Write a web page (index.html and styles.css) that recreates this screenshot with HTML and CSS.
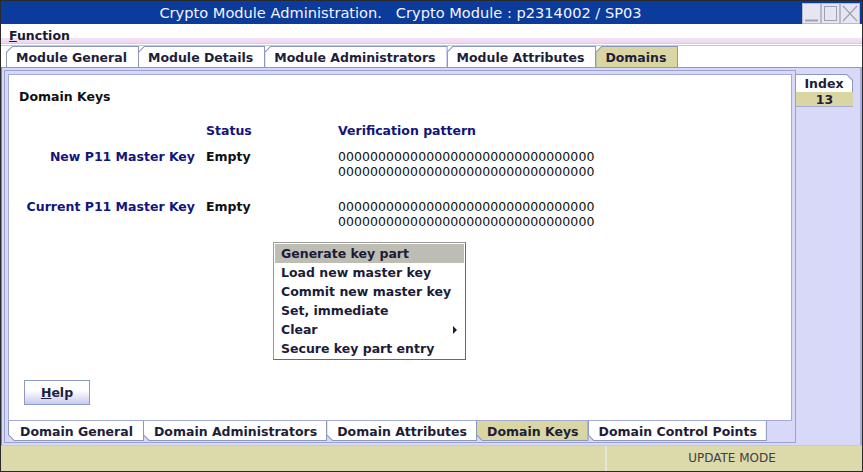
FILE: index.html
```html
<!DOCTYPE html>
<html>
<head>
    <title>Crypto Module Administration</title>
    <meta charset="UTF-8">
    <link rel="stylesheet" href="styles.css">
</head>
<body>
    <div class="window">

        <div class="titlebar">
            <div class="title">Crypto Module Administration.&nbsp;&nbsp; Crypto Module : p2314002 / SP03</div>
            <div class="wbtns">
                <svg width="58" height="21" viewBox="0 0 58 21">
                    <rect x="0.5" y="0.5" width="18" height="20" fill="#e6e6f2" stroke="#b8b8c8"/>
                    <line x1="3" y1="17.5" x2="16" y2="17.5" stroke="#a0a0b4" stroke-width="2"/>
                    <rect x="19.5" y="0.5" width="18" height="20" fill="#e6e6f2" stroke="#b8b8c8"/>
                    <rect x="22.5" y="3.5" width="12" height="14" fill="none" stroke="#a0a0b4"/>
                    <rect x="38.5" y="0.5" width="19" height="20" fill="#e6e6f2" stroke="#b8b8c8"/>
                    <path d="M41 3 L55 18 M55 3 L41 18" stroke="#a0a0b4" stroke-width="1.2"/>
                </svg>
            </div>
        </div>

        <div class="menubar">
            <span class="menu-item"><u>F</u>unction</span>
        </div>

        <div class="tabs top-tabs">
            <div class="tab"><span>Module General</span></div>
            <div class="tab"><span>Module Details</span></div>
            <div class="tab"><span>Module Administrators</span></div>
            <div class="tab"><span>Module Attributes</span></div>
            <div class="tab selected"><span>Domains</span></div>
        </div>

        <div class="pane">
            <div class="inner">
                <div class="content">
                    <div class="heading">Domain Keys</div>

                    <div class="keys">
                        <div class="label"></div>
                        <div class="colhead status">Status</div>
                        <div class="colhead">Verification pattern</div>

                        <div class="label gap-a">New P11 Master Key</div>
                        <div class="value status gap-a">Empty</div>
                        <div class="pattern gap-a">00000000000000000000000000000000<br>00000000000000000000000000000000</div>

                        <div class="label gap-b">Current P11 Master Key</div>
                        <div class="value status gap-b">Empty</div>
                        <div class="pattern gap-b">00000000000000000000000000000000<br>00000000000000000000000000000000</div>
                    </div>

                    <button class="help"><u>H</u>elp</button>

                    <div class="popup">
                        <div class="popup-item active">Generate key part</div>
                        <div class="popup-item">Load new master key</div>
                        <div class="popup-item">Commit new master key</div>
                        <div class="popup-item">Set, immediate</div>
                        <div class="popup-item">Clear <span class="arrow"></span></div>
                        <div class="popup-item">Secure key part entry</div>
                    </div>
                </div>

                <div class="tabs bottom-tabs">
                    <div class="tab"><span>Domain General</span></div>
                    <div class="tab"><span>Domain Administrators</span></div>
                    <div class="tab"><span>Domain Attributes</span></div>
                    <div class="tab selected"><span>Domain Keys</span></div>
                    <div class="tab"><span>Domain Control Points</span></div>
                </div>
            </div>

            <div class="index">
                <div class="index-tab"><span>Index</span></div>
                <div class="index-value">13</div>
            </div>
        </div>

        <div class="statusbar">
            <div class="status-left"></div>
            <div class="status-right">UPDATE MODE</div>
        </div>

    </div>
</body>
</html>
```

FILE: styles.css
```css
body {
    margin: 0;
    padding: 0;
    font-family: 'DejaVu Sans', sans-serif;
    background: #2a2a2a;
}

.window {
    width: 863px;
    height: 472px;
    box-sizing: border-box;
    border: 1px solid #2a2a2a;
    background: #fff;
    display: flex;
    flex-direction: column;
    overflow: hidden;
}

/* title bar */
.titlebar {
    height: 23px;
    background: #0b3b9b;
    display: flex;
    align-items: center;
}

.title {
    flex: 1;
    text-align: center;
    color: #f4f4ff;
    font-size: 14.6px;
    padding-right: 2px;
}

.wbtns {
    width: 60px;
    height: 21px;
    padding-top: 1px;
}

.wbtns svg {
    display: block;
}

/* menu */
.menubar {
    height: 22px;
    box-sizing: border-box;
    background: linear-gradient(#fff 0, #fff 14px, #f3e2f4 14px, #ecd8f0 19px, #d8cce6 19px, #d8cce6 20px, #fff 20px);
    border-bottom: 1px solid #c8c8d4;
    padding-left: 8px;
}

.menu-item {
    font-size: 12.5px;
    font-weight: bold;
    color: #1a1a30;
    line-height: 21px;
    position: relative;
    top: 1px;
}

/* tabs */
.tabs {
    display: flex;
    font-size: 12.5px;
    font-weight: bold;
    color: #1e1e38;
}

.tab {
    background: #8c98bc;
    margin-left: -1px;
}

.tab span {
    display: block;
    background: #fff;
    white-space: nowrap;
}

.tab.selected span {
    background: #d9d6a4;
}

.top-tabs {
    height: 21px;
    padding-left: 6px;
    background: #fff;
}

.top-tabs .tab {
    padding: 1px 1px 0 1px;
    clip-path: polygon(0 100%, 0 6px, 6px 0, 100% 0, 100% 100%);
}

.top-tabs .tab span {
    height: 20px;
    line-height: 22px;
    padding: 0 11px 0 9px;
    clip-path: polygon(0 100%, 0 5.5px, 5.5px 0, 100% 0, 100% 100%);
}

.bottom-tabs {
    height: 20px;
    padding-left: 1px;
}

.bottom-tabs .tab {
    padding: 0 1px 1px 1px;
    clip-path: polygon(0 0, 100% 0, 100% 100%, 6px 100%, 0 calc(100% - 6px));
}

.bottom-tabs .tab span {
    height: 19px;
    line-height: 21px;
    padding: 0 9px 0 10px;
    clip-path: polygon(0 0, 100% 0, 100% 100%, 5.5px 100%, 0 calc(100% - 5.5px));
}

.bottom-tabs .tab:first-child span {
    padding: 0 10px 0 11px;
}

/* panes */
.pane {
    height: 378px;
    box-sizing: border-box;
    background: #d8d8f8;
    border-top: 1px solid #8c98c8;
    border-left: 1px solid #7c84b4;
    border-right: 2px solid #a8acd8;
    padding: 2px 0 0 2px;
    display: flex;
}

.inner {
    width: 792px;
    height: 373px;
    box-sizing: border-box;
    border: 1px solid #9aa2d4;
    padding: 3px 3px 1px 3px;
    display: flex;
    flex-direction: column;
}

.content {
    position: relative;
    height: 347px;
    box-sizing: border-box;
    background: #fff;
    border: 1px solid #a4aad8;
    font-size: 12.5px;
}

.heading {
    font-weight: bold;
    color: #111;
    line-height: 15px;
    margin: 14px 0 0 10px;
}

.keys {
    display: grid;
    grid-template-columns: 186px 143px auto;
    margin-top: 19px;
    line-height: 15px;
}

.label {
    text-align: right;
    font-weight: bold;
    color: #14147a;
}

.colhead {
    font-weight: bold;
    color: #14147a;
}

.status {
    padding-left: 11px;
}

.value {
    font-weight: bold;
    color: #111;
}

.pattern {
    color: #111;
    letter-spacing: 0.06px;
}

.gap-a {
    margin-top: 11px;
}

.gap-b {
    margin-top: 20px;
}

.help {
    display: block;
    margin: 151px 0 0 15px;
    width: 66px;
    height: 25px;
    border: 1px solid #8c9ac8;
    background: linear-gradient(#fff, #fff 40%, #c8c8f2);
    font-family: 'DejaVu Sans', sans-serif;
    font-size: 12.5px;
    font-weight: bold;
    color: #1e1e40;
    padding: 0;
}

/* popup menu */
.popup {
    position: absolute;
    left: 264px;
    top: 167px;
    width: 193px;
    box-sizing: border-box;
    background: #fff;
    border: 1px solid #9a9a9a;
    border-right-color: #6a6a6a;
    border-bottom-color: #6a6a6a;
    padding: 1px;
    font-weight: bold;
    color: #1c1c3a;
}

.popup-item {
    height: 19px;
    line-height: 19px;
    padding-left: 6px;
    position: relative;
}

.popup-item.active {
    background: #bdbdb4;
}

.arrow {
    position: absolute;
    right: 7px;
    top: 6px;
    border-left: 4px solid #1c1c3a;
    border-top: 4px solid transparent;
    border-bottom: 4px solid transparent;
}

/* index column */
.index {
    padding-top: 4px;
    margin-left: -1px;
    font-size: 12.5px;
    font-weight: bold;
    color: #1e1e38;
}

.index-tab {
    width: 58px;
    background: #8c98bc;
    padding: 1px 1px 0 1px;
    box-sizing: border-box;
    clip-path: polygon(0 0, calc(100% - 6px) 0, 100% 6px, 100% 100%, 0 100%);
}

.index-tab span {
    display: block;
    background: #fff;
    height: 17px;
    line-height: 17px;
    text-align: center;
    clip-path: polygon(0 0, calc(100% - 5.5px) 0, 100% 5.5px, 100% 100%, 0 100%);
}

.index-value {
    width: 57px;
    height: 15px;
    line-height: 15px;
    box-sizing: border-box;
    margin-left: 1px;
    background: #d9d6a4;
    border-bottom: 1px solid #a8acd0;
    text-align: center;
}

/* status bar */
.statusbar {
    flex: 1;
    display: flex;
    background: #dcd9aa;
    border-top: 1px solid #c4c8e0;
}

.status-left {
    width: 604px;
    border-right: 2px solid #e4e6e0;
}

.status-right {
    flex: 1;
    text-align: center;
    font-size: 12px;
    color: #404040;
    line-height: 25px;
    padding-right: 5px;
}
```
